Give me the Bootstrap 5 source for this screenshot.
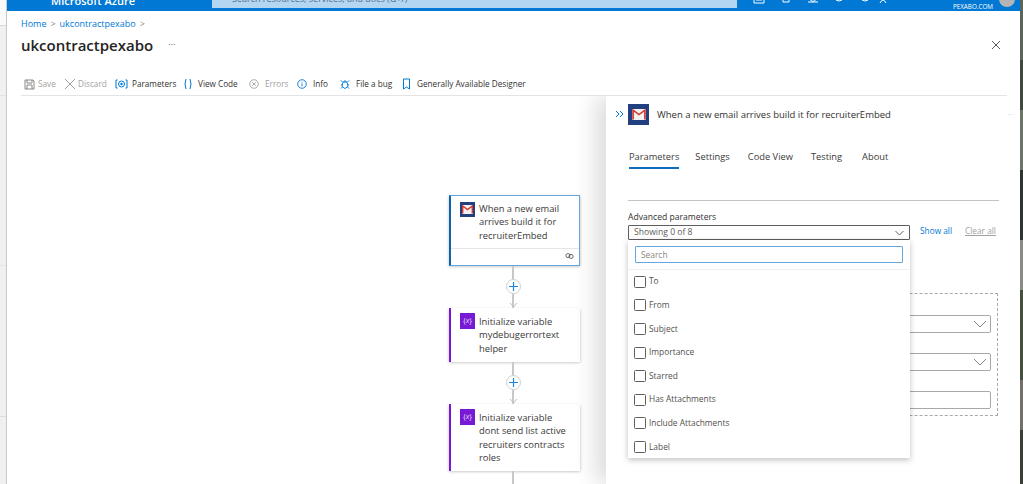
<!DOCTYPE html>
<html lang="en">
<head>
<meta charset="UTF-8">
<title>ukcontractpexabo</title>
<link rel="stylesheet" href="https://cdn.jsdelivr.net/npm/bootstrap@5.3.0/dist/css/bootstrap.min.css">
<style>
html, body { height: 484px; overflow: hidden; }
body { font-family: "Open Sans", "Noto Sans", sans-serif; font-size: 9px; color: #323130; background: #fff; }
.shot { height: 484px; }
.desk-left { width: 7px; flex: none; border-right: 1px solid #c8c8c8; background: linear-gradient(#fafafa 0 25px, #d8d8d8 25px 26px, #f0f0f0 26px 95px, #e4e4e4 95px 96px, #f0f0f0 96px 265px, #e4e4e4 265px 266px, #f0f0f0 266px 416px, #dedede 416px 417px, #f0f0f0 417px); }
.desk-right { width: 3px; flex: none; background: linear-gradient(#5b665a 0 60px, #3f4a3c 60px 110px, #6d7468 110px 170px, #2e3530 170px 240px, #8a8a86 240px 290px, #46503f 290px 380px, #73706c 380px 430px, #3a4038 430px); }
.portal { min-width: 0; }
.topbar { height: 11px; flex: none; background: #0078d4; color: #fff; overflow: hidden; position: relative; }
.topbar-brand { position: absolute; left: 44px; top: -7px; font-size: 11px; font-weight: 600; white-space: nowrap; }
.topbar-search { position: absolute; left: 205px; top: -2px; width: 525px; height: 10px; background: #b3d6f2; font-size: 9px; color: #55708a; padding-left: 20px; line-height: 1px; }
.topbar-user { position: absolute; right: 27px; top: 2px; font-size: 6.3px; line-height: 9px; }
.topbar-avatar { position: absolute; right: 5px; top: -9px; width: 16px; height: 16px; border-radius: 50%; background: #b5b5b5; }
.topbar-ico { position: absolute; top: -3px; }
.ti-menu { left: 10px; }
.ti-a { left: 746px; }
.ti-b { left: 774px; }
.ti-c { left: 800px; }
.ti-d { left: 826px; }
.ti-e { left: 852px; }
.ti-f { left: 870px; }
.crumbs { padding: 6px 0 0 14px; font-size: 9px; height: 24px; flex: none; color: #8a8886; }
.crumbs a { color: #0078d4; text-decoration: none; }
.crumbs span { margin: 0 4px; }
.page-title { padding-left: 14px; height: 20px; margin-bottom: 9px; flex: none; }
.page-title h1 { font-family: "Open Sans", sans-serif; font-size: 15px; font-weight: 600; margin: 0; color: #252423; }
.page-title .more { margin-left: 15px; color: #605e5c; font-size: 9px; }
.close-x { margin-right: 19px; }
.cmdbar { margin-left: 14px; margin-right: 13px; height: 32px; flex: none; padding: 14px 0 0 3px; border-bottom: 1px solid #e4e4e4; font-size: 8.2px; line-height: 12px; white-space: nowrap; }
.cmd { color: #323130; }
.cmd.off { color: #a3a1a0; }
.cmd svg { flex: none; }
.c-save { width: 40px; gap: 3px; }
.c-discard { width: 51px; gap: 2px; }
.c-params { width: 69px; gap: 4px; }
.c-code { width: 65px; gap: 6px; }
.c-errors { width: 48px; gap: 6px; }
.c-info { width: 43px; gap: 6px; }
.c-bug { width: 63px; gap: 6px; }
.c-ga { gap: 7px; }
.workspace { min-height: 0; position: relative; background: #fff; overflow: hidden; }
.flow { position: absolute; left: 442px; top: 99px; width: 131px; }
.flow-card { background: #fff; border-left: 2px solid #7719d5; box-shadow: 0 0.5px 3px rgba(0,0,0,.28); padding: 5px 8px 0 9px; font-size: 9.4px; line-height: 13.3px; color: #3b3a39; }
.flow-card.sel { border: 1px solid #64a8e2; border-left: 2px solid #0f62ac; height: 71px; }
.card-short { height: 54px; }
.card-tall { height: 67px; }
.flow-icon { width: 15px; height: 16px; flex: none; background: #7719d5; color: #e8d9fb; font-size: 7.5px; text-align: center; line-height: 15px; }
.gmail-icon { background: #22407f; display: flex; align-items: center; justify-content: center; margin-top: 1px; height: 15px; }
.flow-txt { margin-left: 4px; margin-top: 2px; }
.sel .flow-txt { margin-top: 1px; }
.sel-foot { border-top: 1px solid #e6e6e6; margin: 6px -8px 0 -9px; height: 17px; padding: 3px 5px 0 0; text-align: right; line-height: 8px; }
.flow-gap { height: 42px; position: relative; }
.flow-end { height: 14px; }
.flowline { position: absolute; left: 63px; top: 0; bottom: 0; width: 2px; background: #c8c8c8; }
.flow-plus { position: absolute; left: 57px; top: 13px; width: 15px; height: 15px; border-radius: 50%; background: #fff; border: 1px solid #d0d0d0; }
.flow-head { position: absolute; left: 60px; bottom: 0; }
.drawer { position: absolute; left: 599px; top: 0; width: 414px; bottom: 0; background: #fff; box-shadow: -10px 0 22px rgba(0,0,0,.14); }
.drawer-head { height: 41px; padding: 8px 0 0 7px; }
.drawer-head .chev { width: 14px; flex: none; margin-top: 6px; }
.drawer-icon { width: 21px; height: 21px; background: #22407f; display: flex; align-items: center; justify-content: center; flex: none; margin-left: 1px; }
.drawer-title { margin-left: 8px; margin-top: 4px; font-size: 9.5px; color: #323130; white-space: nowrap; }
.drawer-more { position: absolute; right: 6px; top: 14px; color: #c7dff3; font-size: 9px; line-height: 1; }
.tabs-row { padding-left: 23px; height: 26px; margin-top: 9px; font-size: 9.3px; color: #3b3a39; }
.tab-item { height: 23px; padding-top: 4px; margin-right: 18px; }
.tab-item.on { border-bottom: 2px solid #0f6cbd; margin-right: 16px; }
.tab-wide { margin-right: 20px; }
.sep { margin: 28px 21px 0 22px; height: 1px; background: #c4c4c4; }
.adv { padding: 10px 0 0 22px; position: relative; }
.adv-label { font-size: 8.6px; line-height: 12px; color: #323130; }
.adv-select { width: 282px; height: 15px; border: 1px solid #605e5c; border-radius: 1px; margin-top: 2px; padding: 0 5px; font-size: 8.6px; color: #605e5c; }
.adv-links { gap: 13px; margin-left: 10px; font-size: 8.3px; }
.adv-links a { color: #0078d4; text-decoration: none; }
.adv-links a.off { color: #a3a1a0; text-decoration: underline; }
.dashbox { position: absolute; left: 22px; top: 92px; width: 370px; height: 123px; border: 1px dashed #a8a8a8; }
.ghost-field { position: absolute; left: 0; right: 6px; border: 1px solid #a8a8a8; border-radius: 2px; height: 18px; }
.ghost-field svg { position: absolute; right: 3px; top: 4px; }
.gf-1 { top: 21px; }
.gf-2 { top: 59px; }
.gf-3 { top: 97px; }
.menu-pop { position: absolute; left: 22px; top: 39px; width: 282px; height: 218px; background: #fff; box-shadow: 0 2px 6px rgba(0,0,0,.25); z-index: 3; }
.menu-search { padding: 6px 7px; border-bottom: 1px solid #f0f0f0; height: 30px; }
.menu-search div { height: 17px; border: 1px solid #64a8e2; border-radius: 1px; color: #8a8886; font-size: 8.4px; line-height: 15px; padding-left: 5px; }
.menu-opt { height: 23.6px; padding-left: 6px; gap: 3px; font-size: 8.4px; color: #52504e; }
.menu-box { width: 12px; height: 12px; border: 1px solid #605e5c; border-radius: 1.5px; flex: none; }
</style>
</head>
<body>
<div class="shot d-flex">
  <div class="desk-left"></div>
  <div class="portal flex-grow-1 d-flex flex-column">
    <div class="topbar">
      <div class="topbar-brand">Microsoft Azure</div>
      <div class="topbar-search">Search resources, services, and docs (G+/)</div>
      <svg class="topbar-ico ti-menu" width="12" height="6"><path d="M1 2h10" stroke="#fff"/></svg>
      <svg class="topbar-ico ti-a" width="12" height="8"><path d="M1 0v6h10v-6M3 3h6" stroke="#fff" fill="none"/></svg>
      <svg class="topbar-ico ti-b" width="12" height="8"><path d="M2 0v5h6v-5" stroke="#fff" fill="none"/></svg>
      <svg class="topbar-ico ti-c" width="12" height="8"><path d="M2 1q4 7 8 0M1 5h10" stroke="#fff" fill="none"/></svg>
      <svg class="topbar-ico ti-d" width="12" height="8"><path d="M2 0a4 4 0 0 0 8 0" stroke="#fff" fill="none"/></svg>
      <svg class="topbar-ico ti-e" width="12" height="8"><path d="M2 0a4 4 0 0 0 8 0M6 0v3" stroke="#fff" fill="none"/></svg>
      <svg class="topbar-ico ti-f" width="12" height="8"><path d="M3 6q3-6 6 0" stroke="#fff" fill="none"/></svg>
      <div class="topbar-user">PEXABO.COM</div>
      <div class="topbar-avatar"></div>
    </div>
    <div class="crumbs"><a href="#">Home</a><span>&gt;</span><a href="#">ukcontractpexabo</a><span>&gt;</span></div>
    <div class="page-title d-flex align-items-center">
      <h1>ukcontractpexabo</h1>
      <span class="more">···</span>
      <svg class="close-x ms-auto" width="10" height="10"><path d="M1 1l8 8M9 1l-8 8" stroke="#605e5c"/></svg>
    </div>
    <div class="cmdbar d-flex align-items-start">
      <span class="cmd off c-save d-flex align-items-center"><svg width="11" height="11" viewBox="0 0 11 11"><path d="M1 1h8l1 1v8H1zM3 1v3h5V1M3 10V6h5v4" fill="none" stroke="#8a8886"/></svg>Save</span>
      <span class="cmd off c-discard d-flex align-items-center"><svg width="12" height="12" viewBox="0 0 12 12"><path d="M1 1l10 10M11 1L1 11" stroke="#a3a1a0"/></svg>Discard</span>
      <span class="cmd c-params d-flex align-items-center"><svg width="13" height="10" viewBox="0 0 13 10"><path d="M2.5 1H1v8h1.5M10.5 1H12v8h-1.5" fill="none" stroke="#0078d4"/><circle cx="6.5" cy="5" r="3" fill="none" stroke="#0078d4"/><circle cx="6.5" cy="5" r="1.2" fill="#0078d4"/></svg>Parameters</span>
      <span class="cmd c-code d-flex align-items-center"><svg width="8" height="12" viewBox="0 0 8 12"><path d="M2 1L1 6l1 5M6 1l1 5-1 5" fill="none" stroke="#0078d4"/></svg>View Code</span>
      <span class="cmd off c-errors d-flex align-items-center"><svg width="10" height="10" viewBox="0 0 11 11"><circle cx="5.5" cy="5.5" r="4.7" fill="none" stroke="#a3a1a0"/><path d="M3.5 3.5l4 4M7.5 3.5l-4 4" stroke="#a3a1a0"/></svg>Errors</span>
      <span class="cmd c-info d-flex align-items-center"><svg width="10" height="10" viewBox="0 0 11 11"><circle cx="5.5" cy="5.5" r="4.7" fill="none" stroke="#0078d4"/><path d="M5.5 5v3M5.5 3v1" stroke="#0078d4"/></svg>Info</span>
      <span class="cmd c-bug d-flex align-items-center"><svg width="10" height="12" viewBox="0 0 11 12"><path d="M3.5 4h4l1 2v3l-3 2-3-2V6zM4 4a1.5 1.5 0 0 1 3 0M1 2l2 2M10 2L8 4M1 7h2M10 7H8M1 11l2-2M10 11L8 9" fill="none" stroke="#0078d4"/></svg>File a bug</span>
      <span class="cmd c-ga d-flex align-items-center"><svg width="7" height="12" viewBox="0 0 7 12"><path d="M.5 1h6v10L3.5 9l-3 2z" fill="none" stroke="#0078d4"/></svg>Generally Available Designer</span>
    </div>
    <div class="workspace flex-grow-1">
      <div class="flow">
        <div class="flow-card sel">
          <div class="d-flex">
            <div class="flow-icon gmail-icon"><svg width="11" height="9" viewBox="0 0 11 9"><rect width="11" height="9" fill="#f4f1f1"/><path d="M.7 8.5V1l4.8 3.6L10.3 1v7.5" fill="none" stroke="#d6382c" stroke-width="1.4"/></svg></div>
            <div class="flow-txt">When a new email arrives build it for recruiterEmbed</div>
          </div>
          <div class="sel-foot"><svg width="9" height="6" viewBox="0 0 10 7"><circle cx="3.2" cy="3" r="2.4" fill="none" stroke="#555"/><circle cx="6.8" cy="4" r="2.4" fill="none" stroke="#555"/></svg></div>
        </div>
        <div class="flow-gap">
          <div class="flowline"></div>
          <div class="flow-plus d-flex align-items-center justify-content-center"><svg width="9" height="9"><path d="M4.5 0v9M0 4.5h9" stroke="#1e88e0" stroke-width="1.2"/></svg></div>
          <svg class="flow-head" width="9" height="6"><path d="M1 1l3.5 4L8 1" fill="none" stroke="#c0c0c0"/></svg>
        </div>
        <div class="flow-card card-short">
          <div class="d-flex">
            <div class="flow-icon">{<i>x</i>}</div>
            <div class="flow-txt">Initialize variable mydebugerrortext helper</div>
          </div>
        </div>
        <div class="flow-gap">
          <div class="flowline"></div>
          <div class="flow-plus d-flex align-items-center justify-content-center"><svg width="9" height="9"><path d="M4.5 0v9M0 4.5h9" stroke="#1e88e0" stroke-width="1.2"/></svg></div>
          <svg class="flow-head" width="9" height="6"><path d="M1 1l3.5 4L8 1" fill="none" stroke="#c0c0c0"/></svg>
        </div>
        <div class="flow-card card-tall">
          <div class="d-flex">
            <div class="flow-icon">{<i>x</i>}</div>
            <div class="flow-txt">Initialize variable dont send list active recruiters contracts roles</div>
          </div>
        </div>
        <div class="flow-gap flow-end"><div class="flowline"></div></div>
      </div>
      <div class="drawer">
        <div class="drawer-head d-flex align-items-start">
          <svg class="chev" width="10" height="8" viewBox="0 0 10 8"><path d="M1 1l3 3-3 3M5 1l3 3-3 3" fill="none" stroke="#0078d4"/></svg>
          <div class="drawer-icon"><svg width="14" height="11" viewBox="0 0 11 9"><rect width="11" height="9" fill="#f4f1f1"/><path d="M.7 8.5V1l4.8 3.6L10.3 1v7.5" fill="none" stroke="#d6382c" stroke-width="1.3"/></svg></div>
          <div class="drawer-title">When a new email arrives build it for recruiterEmbed</div>
          <span class="drawer-more">···</span>
        </div>
        <div class="tabs-row d-flex">
          <div class="tab-item on">Parameters</div>
          <div class="tab-item">Settings</div>
          <div class="tab-item">Code View</div>
          <div class="tab-item tab-wide">Testing</div>
          <div class="tab-item">About</div>
        </div>
        <div class="sep"></div>
        <div class="adv">
          <div class="adv-label">Advanced parameters</div>
          <div class="d-flex align-items-center">
            <div class="adv-select d-flex align-items-center justify-content-between">
              <span>Showing 0 of 8</span>
              <svg width="9" height="6" viewBox="0 0 9 6"><path d="M.5 1l4 4 4-4" fill="none" stroke="#605e5c"/></svg>
            </div>
            <div class="adv-links d-flex"><a href="#">Show all</a><a class="off" href="#">Clear all</a></div>
          </div>
          <div class="dashbox">
            <div class="ghost-field gf-1"><svg width="14" height="9" viewBox="0 0 14 9"><path d="M1 1l6 6 6-6" fill="none" stroke="#8a8886"/></svg></div>
            <div class="ghost-field gf-2"><svg width="14" height="9" viewBox="0 0 14 9"><path d="M1 1l6 6 6-6" fill="none" stroke="#8a8886"/></svg></div>
            <div class="ghost-field gf-3"></div>
          </div>
          <div class="menu-pop">
            <div class="menu-search"><div>Search</div></div>
            <div class="menu-list">
              <div class="menu-opt d-flex align-items-center"><span class="menu-box"></span>To</div>
              <div class="menu-opt d-flex align-items-center"><span class="menu-box"></span>From</div>
              <div class="menu-opt d-flex align-items-center"><span class="menu-box"></span>Subject</div>
              <div class="menu-opt d-flex align-items-center"><span class="menu-box"></span>Importance</div>
              <div class="menu-opt d-flex align-items-center"><span class="menu-box"></span>Starred</div>
              <div class="menu-opt d-flex align-items-center"><span class="menu-box"></span>Has Attachments</div>
              <div class="menu-opt d-flex align-items-center"><span class="menu-box"></span>Include Attachments</div>
              <div class="menu-opt d-flex align-items-center"><span class="menu-box"></span>Label</div>
            </div>
          </div>
        </div>
      </div>
    </div>
  </div>
  <div class="desk-right"></div>
</div>
<script src="https://cdn.jsdelivr.net/npm/bootstrap@5.3.0/dist/js/bootstrap.bundle.min.js"></script>
</body>
</html>
